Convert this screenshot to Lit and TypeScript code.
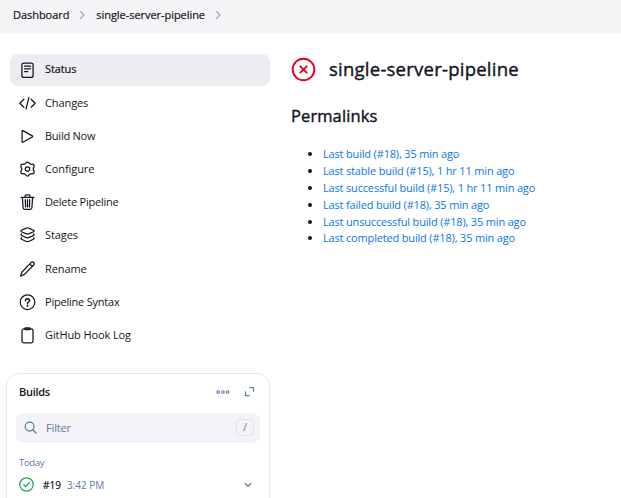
import { LitElement, html, svg, css } from "lit";
import { customElement } from "lit/decorators.js";
import { classMap } from "lit/directives/class-map.js";

const icons: Record<string, unknown> = {
  status: svg`<rect x="2.9" y="1" width="11.2" height="14.4" rx="2"/><path d="M5.6 4.2h5.8M5.6 6.8h5.8M5.6 9.5h3.2"/>`,
  changes: svg`<path d="M4.9 4.2.8 8.2l4.1 4M12.1 4.2l4.1 4-4.1 4M9.9 2.4 7.1 14"/>`,
  build: svg`<path d="M3.1 3.1v10.7c0 .5.4.7.8.5l9.4-5.3c.5-.3.5-.8 0-1.1L3.9 2.6c-.4-.2-.8 0-.8.5z"/>`,
  configure: svg`<path d="M8.5 1c1.7 0 1.7 1.9 3 2.2 1.2.3 2.6-.6 3.5.9.9 1.6-.8 2.4-.8 3.9s1.7 2.4.8 3.9c-.9 1.5-2.3.6-3.5.9-1.3.4-1.3 2.2-3 2.2s-1.7-1.8-3-2.2c-1.2-.3-2.6.6-3.5-.9C1.1 10.4 2.8 9.5 2.8 8S1.1 5.700 2 4.100c.9-1.500 2.300-.6 3.500-.9 1.300-.3 1.300-2.200 3-2.200z"/><circle cx="8.500" cy="8" r="2.200"/>`,
  trash: svg`<path d="M2 3.300h13M3.400 3.500l.7 10.200c.1 1 .7 1.600 1.600 1.600h5.600c.9 0 1.500-.6 1.600-1.600l.7-10.200M6.100 3.100V1.800c0-.6.4-1 1-1h2.800c.6 0 1 .4 1 1v1.300M6.300 5.700l.3 7.200M8.500 5.700v7.200M10.700 5.700l-.3 7.200"/>`,
  stages: svg`<path d="M8.500.8C7.800.8 7.300 1.100 6.700 1.400L2.500 3.300c-.8.4-.8 1 0 1.400l4.200 1.900c1.300.6 2.300.6 3.600 0l4.200-1.900c.8-.4.8-1 0-1.400l-4.200-1.900C9.700 1.100 9.200.8 8.500.8zM2.600 7c-.9.500-.9 1.100 0 1.500l4.100 1.900c1.300.6 2.300.6 3.600 0l4.100-1.900c.9-.4.9-1 0-1.500M2.600 10.800c-.9.500-.9 1.100 0 1.500l4.100 1.900c1.300.6 2.300.6 3.600 0l4.100-1.900c.9-.4.9-1 0-1.500"/>`,
  rename: svg`<path d="m11.300 2.400.9-.9a1.700 1.700 0 0 1 2.500 2.500l-9.500 9.600L1.600 15l1.300-3.700zM10.800 3l2.600 2.600"/>`,
  help: svg`<circle cx="8.500" cy="8.200" r="7.300"/><path d="M6.500 6.700c0-1.200.9-1.900 2-1.900 1.200 0 2.100.7 2.100 1.800 0 1.400-2.100 1.400-2.100 2.900M8.500 11.300v.9" stroke-width="1.500"/>`,
  clipboard: svg`<rect x="3" y="1.800" width="11" height="14" rx="1.800"/><path d="M5.800 1.600c0-.5.3-.8.8-.8h3.800c.5 0 .8.3.8.8s-.3 1-.8 1H6.600c-.5 0-.8-.5-.8-1z"/>`,
};

const tasks = [
  { icon: "status", label: "Status" },
  { icon: "changes", label: "Changes" },
  { icon: "build", label: "Build Now" },
  { icon: "configure", label: "Configure" },
  { icon: "trash", label: "Delete Pipeline" },
  { icon: "stages", label: "Stages" },
  { icon: "rename", label: "Rename" },
  { icon: "help", label: "Pipeline Syntax" },
  { icon: "clipboard", label: "GitHub Hook Log" },
];

const permalinks = [
  "Last build (#18), 35 min ago",
  "Last stable build (#15), 1 hr 11 min ago",
  "Last successful build (#15), 1 hr 11 min ago",
  "Last failed build (#18), 35 min ago",
  "Last unsuccessful build (#18), 35 min ago",
  "Last completed build (#18), 35 min ago",
];

@customElement("app-root")
export class AppRoot extends LitElement {
  static styles = css`
    :host {
      display: block;
      height: 498px;
      overflow: hidden;
      background: #fff;
      color: #14141f;
      font: 11px/16px "Open Sans", "Noto Sans", sans-serif;
    }
    * { box-sizing: border-box; }
    svg {
      display: block;
      flex: none;
      fill: none;
      stroke: currentColor;
      stroke-width: 1.25;
      stroke-linecap: round;
      stroke-linejoin: round;
    }
    .crumbs {
      display: flex;
      align-items: center;
      height: 33px;
      padding: 0 0 3px 13px;
      background: #f5f5f8;
      letter-spacing: -0.05px;
      -webkit-text-stroke: 0.2px;
    }
    .sep { margin: 0 11px 0 10px; color: #9bb0cc; }
    .page { display: flex; height: 465px; }
    .side { width: 270px; padding: 21px 0 0; flex: none; }
    .tasks { display: flex; flex-direction: column; gap: 1.2px; padding-left: 10px; }
    .task {
      display: flex;
      align-items: center;
      gap: 9px;
      height: 32px;
      padding: 0 0 1px 9px;
      border-radius: 8px;
      letter-spacing: -0.1px;
    }
    .task:nth-child(3) { letter-spacing: -0.25px; }
    .task:nth-child(5), .task:nth-child(8) { letter-spacing: -0.22px; }
    .active { background: #ecedf3; -webkit-text-stroke: 0.2px; }
    .active span { margin-top: -1px; }
    .task svg { margin-top: 1px; }
    .builds {
      width: 264px;
      height: 150px;
      margin: 21.4px 0 0 6px;
      padding: 0 9px;
      border: 1px solid #e8e8f0;
      border-radius: 13px;
    }
    .head { display: flex; align-items: center; height: 39px; padding: 0 5px 3px 3px; color: #607ba3; }
    .head-title { flex: 1; color: #14141f; font-weight: 600; letter-spacing: -0.3px; }
    .dots { margin-right: 14px; stroke-width: 1.1; }
    .filter {
      display: flex;
      align-items: center;
      height: 30px;
      padding: 0 6px 0 8px;
      border-radius: 8px;
      background: #f3f3f8;
      color: #607ba3;
    }
    .filter-label { flex: 1; margin-left: 9px; letter-spacing: -0.15px; }
    .key {
      width: 18px;
      height: 17px;
      border: 1px solid #e0e1ec;
      border-radius: 4px;
      line-height: 14px;
      text-align: center;
    }
    .day { margin: 12px 0 0 3px; color: #607ba3; font-size: 9.5px; letter-spacing: -0.3px; }
    .run { display: flex; align-items: center; height: 22px; margin-top: 3px; padding: 0 8px 0 3px; font-size: 10px; }
    .ok { color: #1ea64b; }
    .num { margin: 0 6px 0 9px; -webkit-text-stroke: 0.2px; }
    .time { flex: 1; color: #607ba3; }
    .chev { color: #607ba3; }
    .main { padding: 22px 0 0 21px; }
    .title { display: flex; align-items: center; gap: 13px; height: 28px; }
    .fail { color: #e6001f; stroke-width: 1.9; }
    h1 { margin: 0; font-size: 18.5px; line-height: 24px; font-weight: 400; letter-spacing: 0.24px; -webkit-text-stroke: 0.4px; }
    h2 { margin: 21px 0 0; font-size: 16.5px; line-height: 24px; font-weight: 400; letter-spacing: 0.1px; -webkit-text-stroke: 0.4px; }
    ul { margin: 18px 0 0; padding: 0 0 0 32px; }
    li { height: 16.9px; line-height: 16.9px; }
    a { color: #0a76ea; letter-spacing: -0.17px; }
  `;

  private chevron() {
    return html`<svg class="sep" width="6" height="10" viewBox="0 0 6 10"><path d="m1.5 1.5 3.5 3.5-3.5 3.5"/></svg>`;
  }

  render() {
    return html`
      <nav class="crumbs">
        <span>Dashboard</span>${this.chevron()}
        <span>single-server-pipeline</span>${this.chevron()}
      </nav>
      <div class="page">
        <aside class="side">
          <div class="tasks">
            ${tasks.map((t, i) => html`
              <div class=${classMap({ task: true, active: i === 0 })}>
                <svg width="17" height="17" viewBox="0 0 17 17">${icons[t.icon]}</svg>
                <span>${t.label}</span>
              </div>`)}
          </div>
          <section class="builds">
            <div class="head">
              <span class="head-title">Builds</span>
              <svg class="dots" width="14" height="6" viewBox="0 0 14 6"><circle cx="2.2" cy="3" r="1.3"/><circle cx="7" cy="3" r="1.3"/><circle cx="11.7" cy="3" r="1.3"/></svg>
              <svg width="11" height="11" viewBox="0 0 11 11"><path d="M5.8 1.5h3.7v3.7M1.5 5.8v3.7h3.7"/></svg>
            </div>
            <div class="filter">
              <svg width="13" height="13" viewBox="0 0 13 13"><circle cx="5.6" cy="5.6" r="4.4"/><path d="m9 9 3 3"/></svg>
              <span class="filter-label">Filter</span>
              <span class="key">/</span>
            </div>
            <div class="day">Today</div>
            <div class="run">
              <svg class="ok" width="15" height="15" viewBox="0 0 15 15"><circle cx="7.5" cy="7.5" r="6.7"/><path d="m4.8 7.8 1.9 1.9 3.7-4.2"/></svg>
              <span class="num">#19</span>
              <span class="time">3:42 PM</span>
              <svg class="chev" width="8" height="6" viewBox="0 0 8 6"><path d="m1.2 1.5 2.8 2.7 2.8-2.7"/></svg>
            </div>
          </section>
        </aside>
        <main class="main">
          <div class="title">
            <svg class="fail" width="25" height="25" viewBox="0 0 25 25"><circle cx="12.5" cy="12.5" r="10.8"/><path d="m9.3 9.3 6.4 6.4M15.7 9.3l-6.4 6.4"/></svg>
            <h1>single-server-pipeline</h1>
          </div>
          <h2>Permalinks</h2>
          <ul>${permalinks.map((p) => html`<li><a>${p}</a></li>`)}</ul>
        </main>
      </div>
    `;
  }
}
